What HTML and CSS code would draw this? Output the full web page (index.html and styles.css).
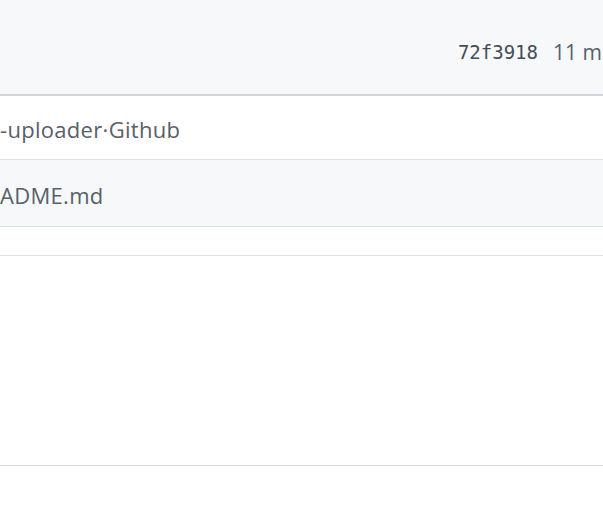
FILE: index.html
```html
<!DOCTYPE html>
<html>
<head>
<meta charset="utf-8">
<link rel="stylesheet" href="styles.css">
</head>
<body>
<div class="page">
  <div class="commit-bar">
    <span class="sha">72f3918</span>
    <span class="age">11 m</span>
  </div>
  <div class="files">
    <div class="file-row">
      <span class="name">-uploader·Github</span>
    </div>
    <div class="file-row alt">
      <span class="name">ADME.md</span>
    </div>
  </div>
  <div class="spacer"></div>
  <div class="readme"></div>
</div>
</body>
</html>
```
FILE: styles.css
```css
html, body {
  margin: 0;
  padding: 0;
  background: #fff;
  overflow: hidden;
}
.page {
  width: 603px;
  height: 519px;
  font-family: "Open Sans", "Noto Sans", sans-serif;
  color: #586069;
}
.commit-bar {
  height: 96px;
  box-sizing: border-box;
  background: #f6f8fa;
  border-bottom: 2px solid #d1d5da;
  display: flex;
  align-items: center;
  justify-content: flex-end;
  gap: 15px;
  padding-top: 10px;
}
.sha {
  font-family: "DejaVu Sans Mono", monospace;
  font-size: 19px;
  color: #444d56;
}
.age {
  font-size: 21px;
  white-space: nowrap;
  width: 50px;
  overflow: hidden;
}
.file-row {
  border-bottom: 1px solid #dfe2e5;
  display: flex;
  align-items: center;
  font-size: 22px;
  letter-spacing: 0.3px;
  padding-top: 3px;
  box-sizing: border-box;
  height: 64px;
}
.file-row.alt {
  height: 67px;
  background: #f6f8fa;
}
.name {
  white-space: nowrap;
}
.spacer {
  height: 28px;
  border-bottom: 1px solid #dfe2e5;
}
.readme {
  height: 209px;
  border-bottom: 1px solid #dadada;
}
```
